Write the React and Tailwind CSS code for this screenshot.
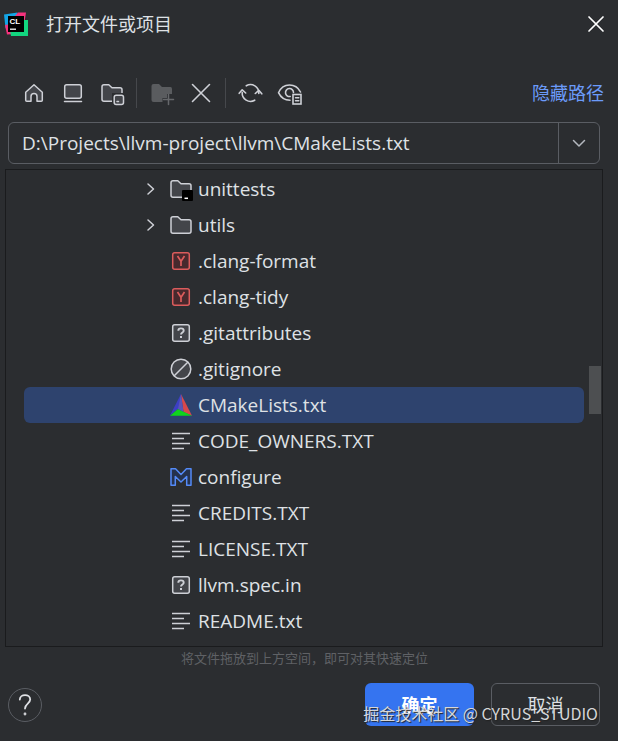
import React, { useState } from "react";

const STROKE = "#ced0d6";
const FILL = "#43454a";

function Icon({ children }) {
  return (
    <svg
      width="24"
      height="24"
      viewBox="0 0 24 24"
      fill="none"
      stroke={STROKE}
      strokeWidth="1.5"
      strokeLinejoin="round"
      strokeLinecap="round"
      className="shrink-0 overflow-visible"
      aria-hidden="true"
    >
      {children}
    </svg>
  );
}

function Logo() {
  return (
    <svg width="24" height="24" viewBox="0 0 24 24" className="shrink-0" aria-hidden="true">
      <path d="M0 2.500 13.500 0.500 12 9 5 20 1.500 16Z" fill="#14a5e6" />
      <path d="M11 4 14 0.500H22L20.500 10 17 12Z" fill="#f5327d" />
      <path d="M1 13 7 12 13 22 3 22.500Z" fill="#f5327d" />
      <path d="M19 8H24V24H7L6 18 17 17Z" fill="#12d67f" />
      <rect x="4" y="4" width="16" height="16" fill="#000" />
      <path d="M6 17.200H12" stroke="#fff" strokeWidth="1.300" />
      <text x="5.500" y="12" fontSize="8" fontWeight="700" fontFamily="Liberation Sans, sans-serif" fill="#fff">
        CL
      </text>
    </svg>
  );
}

const HomeIcon = () => (
  <Icon>
    <path
      d="M3.700 11.200 12 3.700 20.300 11.200V19.300Q20.300 20.300 19.300 20.300H15V15.500A3 3 0 0 0 9 15.500V20.300H4.700Q3.700 20.300 3.700 19.300Z"
      fill={FILL}
    />
  </Icon>
);

const DesktopIcon = () => (
  <Icon>
    <rect x="3.700" y="3.700" width="16.600" height="13.600" rx="2" fill={FILL} />
    <path d="M3.500 20.400H20.500" />
  </Icon>
);

const FOLDER = "M2 5.700Q2 3.700 4 3.700H8.800L12 6.700H20Q22 6.700 22 8.700V18.300Q22 20.300 20 20.300H4Q2 20.300 2 18.300Z";

const ProjectIcon = () => (
  <Icon>
    <path d={FOLDER} fill={FILL} />
    <rect x="12" y="12" width="13" height="13" fill="#2b2d30" stroke="none" />
    <rect x="14.200" y="14.200" width="9.300" height="9.300" rx="2" fill={FILL} />
    <path d="M17 20.500H18.500" />
  </Icon>
);

const NewFolderIcon = () => (
  <Icon>
    <path
      d="M1.500 5Q1.500 3 3.500 3H9L12 6H20.500Q22 6 22 8V13H17V17H12.500V21H3.500Q1.500 21 1.500 19Z"
      fill="#5a5c5f"
      stroke="none"
    />
    <path d="M18.500 13.500V23.500M13.500 18.500H23.500" stroke="#66686b" />
  </Icon>
);

const CrossIcon = () => (
  <Icon>
    <path d="M3.500 3.500 20.500 20.500M20.500 3.500 3.500 20.500" strokeWidth="1.600" />
  </Icon>
);

const RefreshIcon = () => (
  <Icon>
    <path d="M7.300 4.800A8.300 8.300 0 0 1 19.800 12.500" strokeWidth="1.600" />
    <path d="M3.200 11.500A8.300 8.300 0 0 0 15.700 19.200" strokeWidth="1.600" />
    <path d="M16.300 12.500 19.800 9.300 22.800 12.800" strokeWidth="1.600" />
    <path d="M0.200 11.200 3.200 14.700 6.700 11.500" strokeWidth="1.600" transform="matrix(1 0 0 -1 0 23.500)" />
  </Icon>
);

const EyeIcon = () => (
  <Icon>
    <path d="M12 19.300C6 19.300 2.300 15.500 0.500 11.700C2.500 7.200 6.500 4 11.500 4S20.500 7 22.500 11" strokeWidth="1.600" />
    <path d="M12.200 15.500A4 4 0 1 1 15.500 11.500" strokeWidth="1.600" />
    <rect x="15" y="13.500" width="8" height="9.500" strokeWidth="1.600" strokeLinejoin="miter" />
    <path d="M17.500 16.700H20.800M17.500 19.700H20.800" />
  </Icon>
);

const FolderIcon = () => (
  <Icon>
    <path d={FOLDER} fill={FILL} />
  </Icon>
);

const TestFolderIcon = () => (
  <Icon>
    <path d={FOLDER} fill={FILL} />
    <rect x="13" y="13" width="11" height="11" rx="1" fill="#000" stroke="none" />
    <path d="M15.500 21.300H19" stroke="#fff" strokeLinecap="butt" />
  </Icon>
);

const YamlIcon = () => (
  <Icon>
    <rect x="3.700" y="3.700" width="16.600" height="16.600" rx="2" fill="#47292d" stroke="#db5c5c" />
    <path d="M8.500 7 12 12.300 15.500 7M12 12.300V17" stroke="#db5c5c" strokeWidth="1.700" strokeLinecap="butt" />
  </Icon>
);

const UnknownIcon = () => (
  <Icon>
    <rect x="3.700" y="3.700" width="16.600" height="16.600" rx="2" fill={FILL} />
    <path d="M9.300 9.700C9.300 6.600 14.700 6.600 14.700 9.700C14.700 11.500 12 11.400 12 13.500" strokeWidth="1.900" strokeLinecap="butt" />
    <path d="M12 15V17" strokeWidth="2" strokeLinecap="butt" />
  </Icon>
);

const IgnoreIcon = () => (
  <Icon>
    <circle cx="12" cy="12" r="9.800" fill={FILL} />
    <path d="M5.500 18.500 18.500 5.500" />
  </Icon>
);

const CMakeIcon = () => (
  <Icon>
    <g stroke="none">
      <path d="M12 1 1 22.500 9.500 15.500 13 13Z" fill="#3d3fc4" />
      <path d="M12 1 23 22.800 14.500 19Z" fill="#d8484c" />
      <path d="M1 22.800 9 16 23 22.800Z" fill="#0fd31d" />
      <path d="M12 1 9 16 14.500 18.700Z" fill="#5a57b8" />
    </g>
  </Icon>
);

const TextIcon = () => (
  <Icon>
    <path d="M3 4.500H21M3 9.500H15M3 14.500H21M3 19.500H15" strokeLinecap="butt" />
  </Icon>
);

const MakefileIcon = () => (
  <Icon>
    <path
      d="M2 3.700H6.500L12 9.500 17.500 3.700H22V20.300H17.700V11.500L12 17 6.300 11.500V20.300H2Z"
      fill="#25324d"
      stroke="#548af7"
    />
  </Icon>
);

const files = [
  { name: "unittests", icon: TestFolderIcon, folder: true },
  { name: "utils", icon: FolderIcon, folder: true },
  { name: ".clang-format", icon: YamlIcon },
  { name: ".clang-tidy", icon: YamlIcon },
  { name: ".gitattributes", icon: UnknownIcon },
  { name: ".gitignore", icon: IgnoreIcon },
  { name: "CMakeLists.txt", icon: CMakeIcon },
  { name: "CODE_OWNERS.TXT", icon: TextIcon },
  { name: "configure", icon: MakefileIcon },
  { name: "CREDITS.TXT", icon: TextIcon },
  { name: "LICENSE.TXT", icon: TextIcon },
  { name: "llvm.spec.in", icon: UnknownIcon },
  { name: "README.txt", icon: TextIcon },
];

function ToolButton({ label, disabled, children }) {
  return (
    <button type="button" aria-label={label} disabled={disabled} className="flex h-8 w-[39px] items-center justify-center">
      {children}
    </button>
  );
}

const Separator = () => <div className="mx-[5px] h-[30px] w-px bg-[#46484c]" />;

function TreeRow({ file, selected, onSelect }) {
  const FileIcon = file.icon;
  return (
    <li
      role="treeitem"
      aria-selected={selected}
      onClick={onSelect}
      className={
        "flex h-9 items-center rounded-md pl-[117px] " + (selected ? "bg-[#2e436e]" : "")
      }
    >
      <span className="mr-[11px] flex w-[17px] shrink-0 justify-end">
        {file.folder && (
          <button type="button" aria-label={"展开 " + file.name} className="flex">
            <svg width="12" height="14" viewBox="0 0 12 14" fill="none" stroke={STROKE} strokeWidth="1.500" strokeLinecap="round" strokeLinejoin="round">
              <path d="M2 2 7.500 7 2 12" />
            </svg>
          </button>
        )}
      </span>
      <FileIcon />
      <span className="ml-[5px] whitespace-nowrap">{file.name}</span>
    </li>
  );
}

export default function App() {
  const [selected, setSelected] = useState("CMakeLists.txt");
  const [path, setPath] = useState("D:\\Projects\\llvm-project\\llvm\\CMakeLists.txt");

  return (
    <main className="relative flex min-h-screen flex-col bg-[#2b2d30] pb-[15px] font-['Open_Sans','Noto_Sans_CJK_SC',sans-serif] text-[19px] text-[#dfe1e5]">
      <header className="flex h-12 items-center pr-3 pl-1">
        <Logo />
        <h1 className="ml-[18px] flex-1 text-lg">打开文件或项目</h1>
        <button type="button" aria-label="关闭" className="flex">
          <svg width="20" height="20" viewBox="0 0 20 20" fill="none" stroke="#fff" strokeWidth="1.700" strokeLinecap="round">
            <path d="M3 3 17 17M17 3 3 17" />
          </svg>
        </button>
      </header>

      <div className="mt-7 flex h-[34px] items-center pr-[14px] pl-[14px]">
        <ToolButton label="主目录"><HomeIcon /></ToolButton>
        <ToolButton label="桌面"><DesktopIcon /></ToolButton>
        <ToolButton label="项目目录"><ProjectIcon /></ToolButton>
        <Separator />
        <ToolButton label="新建文件夹" disabled><NewFolderIcon /></ToolButton>
        <ToolButton label="删除"><CrossIcon /></ToolButton>
        <Separator />
        <ToolButton label="刷新"><RefreshIcon /></ToolButton>
        <ToolButton label="显示隐藏文件"><EyeIcon /></ToolButton>
        <a href="#path" className="ml-auto text-lg text-[#6b9bfa]">隐藏路径</a>
      </div>

      <div className="mt-3 mr-[18px] ml-2 flex h-[42px] rounded-md border border-[#5a5d63]">
        <input
          id="path"
          aria-label="路径"
          value={path}
          onChange={(e) => setPath(e.target.value)}
          className="min-w-0 flex-1 bg-transparent px-[13px] outline-none"
        />
        <button type="button" aria-label="历史路径" className="flex w-[41px] items-center justify-center border-l border-[#5a5d63]">
          <svg width="14" height="10" viewBox="0 0 14 10" fill="none" stroke="#b4b8bf" strokeWidth="1.500" strokeLinecap="round" strokeLinejoin="round">
            <path d="M1.500 2.500 7 8 12.500 2.500" />
          </svg>
        </button>
      </div>

      <div className="relative mt-[5px] mr-[15px] ml-[5px] border border-[#1a1b1d] pt-px pr-[18px] pb-[7px] pl-[18px]">
        <ul role="tree" aria-label="文件">
          {files.map((file) => (
            <TreeRow
              key={file.name}
              file={file}
              selected={file.name === selected}
              onSelect={() => setSelected(file.name)}
            />
          ))}
        </ul>
        <div className="absolute top-[196px] right-px h-12 w-3 bg-[#4d4f51]" />
      </div>

      <p className="mt-px pr-[9px] text-center text-[13px] leading-5 text-[#5f6165]">将文件拖放到上方空间，即可对其快速定位</p>

      <footer className="mt-[15px] flex items-center gap-[17px] pr-[18px] pl-2 text-lg">
        <button
          type="button"
          aria-label="帮助"
          className="mr-auto flex size-[34px] items-center justify-center rounded-full border border-[#5a5d63]"
        >
          <svg width="14" height="22" viewBox="0 0 14 22" fill="none" stroke="#dfe1e5" strokeWidth="1.800" strokeLinecap="round">
            <path d="M1.800 5.500C2 -0.300 12.200 -0.300 12.200 5.500C12.200 9.500 7 9.800 7 14.500" />
            <circle cx="7" cy="20" r="0.500" />
          </svg>
        </button>
        <button type="button" className="h-[43px] w-[109px] rounded-md bg-[#3574f0] font-bold text-white">
          确定
        </button>
        <button type="button" className="h-[43px] w-[109px] rounded-md border border-[#5a5d63]">
          取消
        </button>
      </footer>

      <p className="pointer-events-none absolute right-5 bottom-4 font-['Noto_Sans_CJK_SC',sans-serif] text-base leading-6 whitespace-nowrap text-[#d6d7d9] [text-shadow:1px_1px_1px_#222]">
        掘金技术社区 @ CYRUS_STUDIO
      </p>
    </main>
  );
}
